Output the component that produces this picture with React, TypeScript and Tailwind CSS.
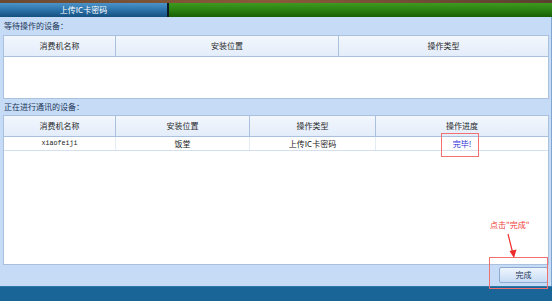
import React from "react";

const waitingCols = [
  { label: "消费机名称", w: "w-[112px]" },
  { label: "安装位置", w: "w-[223px]" },
  { label: "操作类型", w: "flex-1" },
];

const commCols = [
  { label: "消费机名称", w: "w-[112px]" },
  { label: "安装位置", w: "w-[134px]" },
  { label: "操作类型", w: "w-[126px]" },
  { label: "操作进度", w: "flex-1" },
];

const cjk = "font-['Noto_Sans_CJK_SC','Noto_Sans',sans-serif]";

function HeaderRow({ cols }: { cols: { label: string; w: string }[] }) {
  return (
    <div className="flex h-[21px] bg-gradient-to-b from-[#f3f7fd] to-[#e3edfa] border-b border-[#a9c0de]">
      {cols.map((c, i) => (
        <div
          key={c.label}
          className={`${c.w} flex items-center justify-center text-[8px] text-[#2a2a2a] ${
            i < cols.length - 1 ? "border-r border-[#a9c0de]" : ""
          }`}
        >
          {c.label}
        </div>
      ))}
    </div>
  );
}

export default function App() {
  return (
    <div className={`relative w-[552px] h-[301px] overflow-hidden bg-[#c5dbf6] flex flex-col ${cjk}`}>
      {/* photo strip on top */}
      <div className="h-[3px] bg-gradient-to-r from-[#6b4a32] via-[#8a5a3a] to-[#5a4030]" />

      {/* tab bar */}
      <div className="flex h-[14px]">
        <div className="w-[167px] flex items-center justify-center bg-gradient-to-b from-[#4b93c8] via-[#2b72aa] to-[#15507f] text-white text-[8px]">
          上传IC卡密码
        </div>
        <div className="w-[2px] bg-[#0d1a26]" />
        <div className="flex-1 bg-gradient-to-b from-[#3f9a1f] via-[#2a8210] to-[#175f04]" />
      </div>

      {/* content */}
      <div className="flex-1 flex flex-col pl-[3px] pr-[2px] border-r border-[#7fa6d2]">
        <div className="h-[18px] flex items-center pl-[1px] text-[8px] text-[#1d3557]">等待操作的设备：</div>

        <div className="h-[64px] bg-white border border-[#a9c0de] flex flex-col">
          <HeaderRow cols={waitingCols} />
        </div>

        <div className="h-[16px] flex items-center pl-[1px] text-[8px] text-[#1d3557]">正在进行通讯的设备：</div>

        <div className="h-[150px] bg-white border border-[#a9c0de] flex flex-col">
          <HeaderRow cols={commCols} />
          <div className="flex h-[14px] border-b border-[#d3e0f0] text-[8px] text-[#222]">
            <div className="w-[112px] flex items-center justify-center border-r border-[#e3ebf6] font-['Liberation_Mono',monospace] text-[6.7px]">
              xiaofeiji
            </div>
            <div className="w-[134px] flex items-center justify-center border-r border-[#e3ebf6]">饭堂</div>
            <div className="w-[126px] flex items-center justify-center border-r border-[#e3ebf6]">上传IC卡密码</div>
            <div className="flex-1 flex items-center justify-center text-[#2a2ad8]">完毕!</div>
          </div>
        </div>

        <div className="flex-1 flex items-start justify-end pt-[2px] pr-[1px]">
          <button className="w-[49px] h-[16px] rounded-[2px] border border-[#8eaad0] bg-gradient-to-b from-[#eef5fd] to-[#c8dcf4] text-[8px] text-[#1d3557] flex items-center justify-center">
            完成
          </button>
        </div>
      </div>

      {/* bottom bar */}
      <div className="h-[15px] bg-[#1a6598] border-t border-[#2f78aa]" />

      {/* red annotations */}
      <div className="absolute left-[441px] top-[133px] w-[38px] h-[24px] border border-[#f27070]" />
      <div className="absolute left-[489px] top-[257px] w-[59px] h-[32px] border border-[#f27070]" />
      <div className="absolute left-[490px] top-[221px] text-[8px] text-[#f03a3a] leading-none">点击"完成"</div>
      <svg className="absolute left-[500px] top-[231px]" width="20" height="30" viewBox="0 0 20 30">
        <line x1="8" y1="3" x2="13" y2="23" stroke="#ee2b2b" strokeWidth="1.2" />
        <polygon points="9.5,20 16.5,18.5 14,27" fill="#ee2b2b" />
      </svg>
    </div>
  );
}
